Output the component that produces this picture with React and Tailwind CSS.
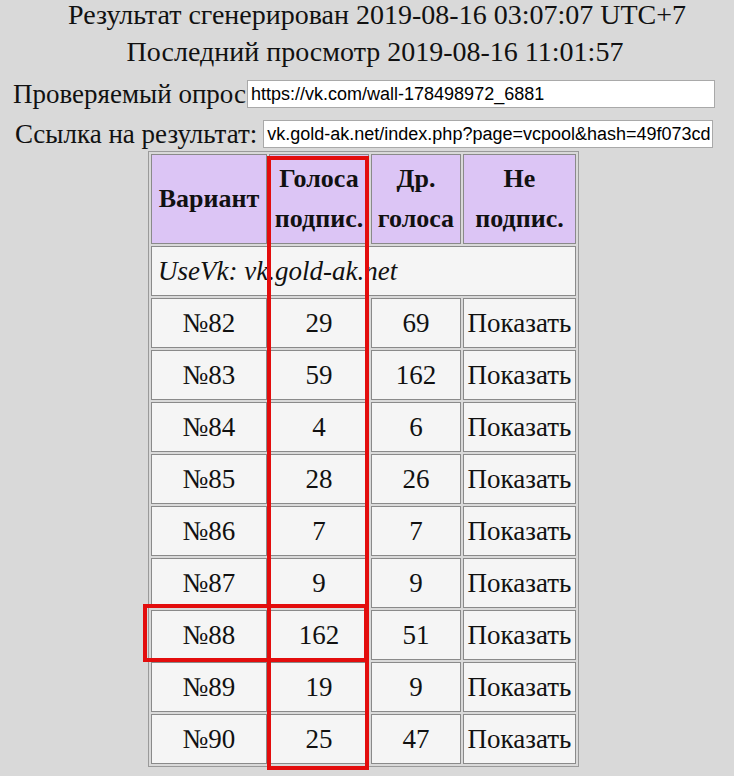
import React from "react";

const rows = [
  ["№82", "29", "69"],
  ["№83", "59", "162"],
  ["№84", "4", "6"],
  ["№85", "28", "26"],
  ["№86", "7", "7"],
  ["№87", "9", "9"],
  ["№88", "162", "51"],
  ["№89", "19", "9"],
  ["№90", "25", "47"],
];

const serif = { fontFamily: '"Liberation Serif", "Times New Roman", serif' };
const sans = { fontFamily: '"Liberation Sans", Arial, sans-serif' };

export default function App() {
  return (
    <div
      className="w-[734px] h-[776px] overflow-hidden bg-[#d9d9d9] text-[#111] text-[27px]"
      style={serif}
    >
      <div className="text-center text-[28px] leading-[30px] pl-[20px]">
        Результат сгенерирован 2019-08-16 03:07:07 UTC+7
      </div>
      <div className="text-center text-[28px] leading-[30px] mt-[7px] pl-[16px]">
        Последний просмотр 2019-08-16 11:01:57
      </div>
      <div className="flex items-center mt-[12px] pl-[13px] h-[30px]">
        <span className="leading-[30px] whitespace-nowrap">Проверяемый опрос</span>
        <div
          className="ml-[1px] w-[468px] h-[28px] shrink-0 bg-white border border-[#a9a9a9] flex items-center pl-[3px] text-[18px] text-black overflow-hidden whitespace-nowrap"
          style={sans}
        >
          https://vk.com/wall-178498972_6881
        </div>
      </div>
      <div className="flex items-center mt-[10px] pl-[15px] h-[30px]">
        <span className="leading-[30px] whitespace-nowrap">Ссылка на результат:</span>
        <div
          className="ml-[6px] w-[450px] h-[28px] shrink-0 bg-white border border-[#a9a9a9] flex items-center pl-[3px] text-[18px] text-black overflow-hidden whitespace-nowrap"
          style={sans}
        >
          vk.gold-ak.net/index.php?page=vcpool&amp;hash=49f073cd
        </div>
      </div>
      <div className="relative ml-[148px] mt-[2px] w-[431px]">
        <table className="border-separate border-spacing-[2px] border border-[#9a9a9a] w-[431px]">
          <thead>
            <tr className="bg-[#dcc5f5]">
              <th className="border border-[#8a8a8a] w-[116px] h-[90px] font-bold text-[26px] leading-[40px] p-0">
                Вариант
              </th>
              <th className="border border-[#8a8a8a] w-[100px] font-bold text-[26px] leading-[40px] p-0">
                Голоса
                <br />
                подпис.
              </th>
              <th className="border border-[#8a8a8a] w-[90px] font-bold text-[26px] leading-[40px] p-0">
                Др.
                <br />
                голоса
              </th>
              <th className="border border-[#8a8a8a] font-bold text-[26px] leading-[40px] p-0">
                Не
                <br />
                подпис.
              </th>
            </tr>
          </thead>
          <tbody>
            <tr className="bg-[#f5f5f5]">
              <td colSpan={4} className="border border-[#8a8a8a] h-[50px] italic pl-[6px] text-left">
                UseVk: vk.gold-ak.net
              </td>
            </tr>
            {rows.map((r) => (
              <tr key={r[0]} className="bg-[#f5f5f5]">
                <td className="border border-[#8a8a8a] h-[50px] text-center p-0">{r[0]}</td>
                <td className="border border-[#8a8a8a] text-center p-0">{r[1]}</td>
                <td className="border border-[#8a8a8a] text-center p-0">{r[2]}</td>
                <td className="border border-[#8a8a8a] text-center p-0 whitespace-nowrap">Показать</td>
              </tr>
            ))}
          </tbody>
        </table>
        <div className="absolute left-[119px] top-[5px] w-[102px] h-[614px] border-[4px] border-[#e30d0d] pointer-events-none" />
        <div className="absolute left-[-5px] top-[453px] w-[225px] h-[58px] border-[4px] border-[#e30d0d] pointer-events-none" />
      </div>
    </div>
  );
}
